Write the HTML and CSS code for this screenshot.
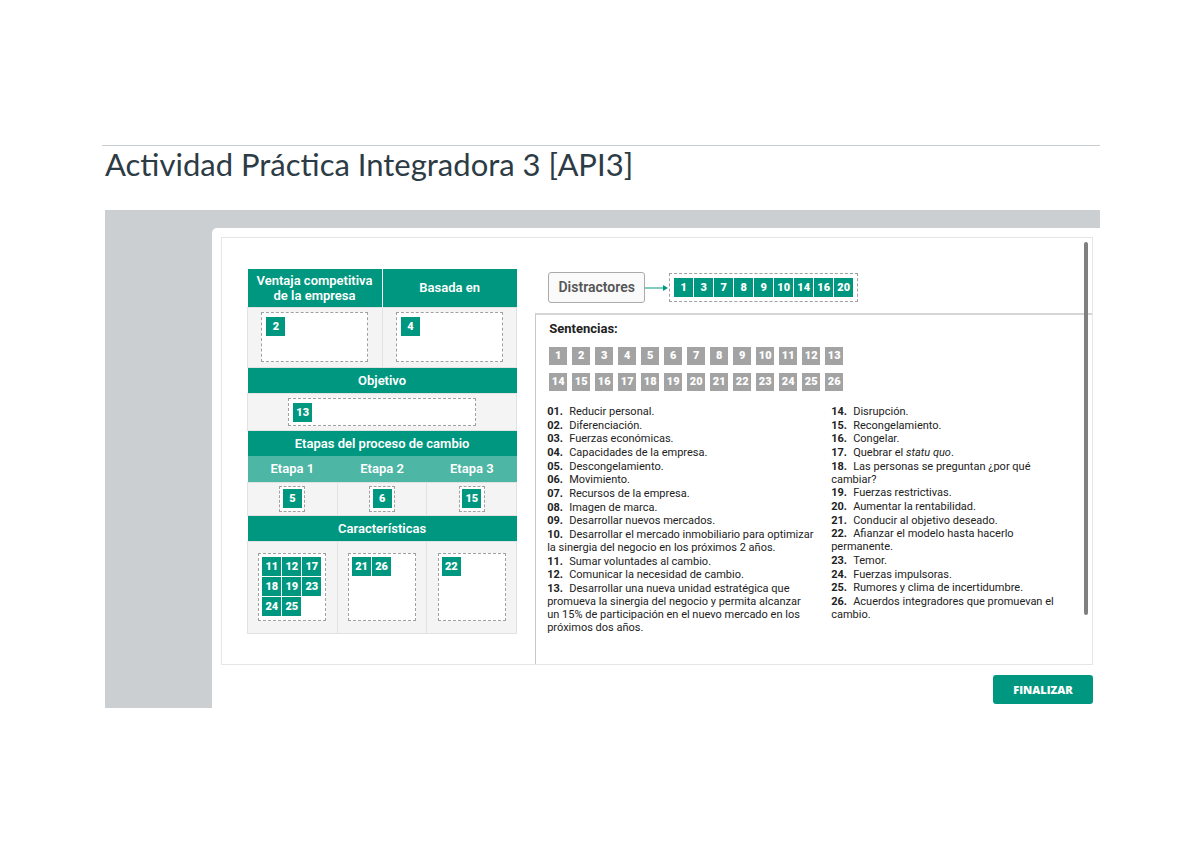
FILE: index.html
```html
<!DOCTYPE html>
<html lang="es">
<head>
    <meta charset="UTF-8">
    <meta name="viewport" content="width=device-width, initial-scale=1.0">
    <title>Actividad Práctica Integradora 3 [API3]</title>
    <link rel="stylesheet" href="styles.css">
</head>
<body>

<header>
    <h1>Actividad Práctica Integradora 3 [API3]</h1>
</header>

<main class="stage">
    <div class="panel">
        <div class="activity">

            <section class="model">
                <table>
                    <tr class="head-top">
                        <th colspan="3">Ventaja competitiva<br>de la empresa</th>
                        <th colspan="3">Basada en</th>
                    </tr>
                    <tr class="row-top">
                        <td colspan="3"><div class="drop drop-wide"><span class="chip">2</span></div></td>
                        <td colspan="3"><div class="drop drop-wide"><span class="chip">4</span></div></td>
                    </tr>
                    <tr class="head">
                        <th colspan="6">Objetivo</th>
                    </tr>
                    <tr class="row-goal">
                        <td colspan="6"><div class="drop drop-goal"><span class="chip">13</span></div></td>
                    </tr>
                    <tr class="head">
                        <th colspan="6">Etapas del proceso de cambio</th>
                    </tr>
                    <tr class="subhead">
                        <th colspan="2">Etapa 1</th>
                        <th colspan="2">Etapa 2</th>
                        <th colspan="2">Etapa 3</th>
                    </tr>
                    <tr class="row-stage">
                        <td colspan="2"><div class="drop drop-one"><span class="chip">5</span></div></td>
                        <td colspan="2"><div class="drop drop-one"><span class="chip">6</span></div></td>
                        <td colspan="2"><div class="drop drop-one"><span class="chip">15</span></div></td>
                    </tr>
                    <tr class="head">
                        <th colspan="6">Características</th>
                    </tr>
                    <tr class="row-features">
                        <td colspan="2">
                            <div class="drop drop-square">
                                <span class="chip">11</span><span class="chip">12</span><span class="chip">17</span>
                                <span class="chip">18</span><span class="chip">19</span><span class="chip">23</span>
                                <span class="chip">24</span><span class="chip">25</span>
                            </div>
                        </td>
                        <td colspan="2">
                            <div class="drop drop-square">
                                <span class="chip">21</span><span class="chip">26</span>
                            </div>
                        </td>
                        <td colspan="2">
                            <div class="drop drop-square">
                                <span class="chip">22</span>
                            </div>
                        </td>
                    </tr>
                </table>
            </section>

            <section class="bank">
                <div class="distractors">
                    <div class="distractors-label">Distractores</div>
                    <svg class="arrow" width="24" height="8" viewBox="0 0 24 8">
                        <path d="M0 4h19" stroke="#009780" stroke-width="1" fill="none"/>
                        <path d="M18 1l5 3-5 3z" fill="#009780"/>
                    </svg>
                    <div class="drop drop-row">
                        <span class="chip">1</span><span class="chip">3</span><span class="chip">7</span>
                        <span class="chip">8</span><span class="chip">9</span><span class="chip">10</span>
                        <span class="chip">14</span><span class="chip">16</span><span class="chip">20</span>
                    </div>
                </div>

                <div class="sentences">
                    <h2>Sentencias:</h2>
                    <div class="numbers">
                        <span class="num">1</span><span class="num">2</span><span class="num">3</span><span class="num">4</span>
                        <span class="num">5</span><span class="num">6</span><span class="num">7</span><span class="num">8</span>
                        <span class="num">9</span><span class="num">10</span><span class="num">11</span><span class="num">12</span>
                        <span class="num">13</span><span class="num">14</span><span class="num">15</span><span class="num">16</span>
                        <span class="num">17</span><span class="num">18</span><span class="num">19</span><span class="num">20</span>
                        <span class="num">21</span><span class="num">22</span><span class="num">23</span><span class="num">24</span>
                        <span class="num">25</span><span class="num">26</span>
                    </div>

                    <div class="lists">
                        <ul>
                            <li><b>01.</b>Reducir personal.</li>
                            <li><b>02.</b>Diferenciación.</li>
                            <li><b>03.</b>Fuerzas económicas.</li>
                            <li><b>04.</b>Capacidades de la empresa.</li>
                            <li><b>05.</b>Descongelamiento.</li>
                            <li><b>06.</b>Movimiento.</li>
                            <li><b>07.</b>Recursos de la empresa.</li>
                            <li><b>08.</b>Imagen de marca.</li>
                            <li><b>09.</b>Desarrollar nuevos mercados.</li>
                            <li><b>10.</b>Desarrollar el mercado inmobiliario para optimizar<br>la sinergia del negocio en los próximos 2 años.</li>
                            <li><b>11.</b>Sumar voluntades al cambio.</li>
                            <li><b>12.</b>Comunicar la necesidad de cambio.</li>
                            <li><b>13.</b>Desarrollar una nueva unidad estratégica que<br>promueva la sinergia del negocio y permita alcanzar<br>un 15% de participación en el nuevo mercado en los<br>próximos dos años.</li>
                        </ul>
                        <ul class="second">
                            <li><b>14.</b>Disrupción.</li>
                            <li><b>15.</b>Recongelamiento.</li>
                            <li><b>16.</b>Congelar.</li>
                            <li><b>17.</b>Quebrar el <i>statu quo</i>.</li>
                            <li><b>18.</b>Las personas se preguntan ¿por qué<br>cambiar?</li>
                            <li><b>19.</b>Fuerzas restrictivas.</li>
                            <li><b>20.</b>Aumentar la rentabilidad.</li>
                            <li><b>21.</b>Conducir al objetivo deseado.</li>
                            <li><b>22.</b>Afianzar el modelo hasta hacerlo<br>permanente.</li>
                            <li><b>23.</b>Temor.</li>
                            <li><b>24.</b>Fuerzas impulsoras.</li>
                            <li><b>25.</b>Rumores y clima de incertidumbre.</li>
                            <li><b>26.</b>Acuerdos integradores que promuevan el<br>cambio.</li>
                        </ul>
                    </div>
                </div>
            </section>

            <div class="scrollbar"></div>
        </div>

        <div class="actions">
            <button type="button">FINALIZAR</button>
        </div>
    </div>
</main>

</body>
</html>
```

FILE: styles.css
```css
* {
    box-sizing: border-box;
}

body {
    font-family: Roboto, Arial, sans-serif;
    margin: 0;
    padding: 145px 100px 0 102px;
    background-color: #fff;
    color: #222;
}

header {
    border-top: 1px solid #c7cdd1;
    padding: 0 3px;
}

h1 {
    margin: 0;
    font-family: Lato, sans-serif;
    font-size: 31px;
    font-weight: 400;
    line-height: 36px;
    color: #2d3b45;
}

.stage {
    margin: 28px 0 0 3px;
    padding: 18px 0 0 107px;
    background-color: #cccfd2;
}

.panel {
    padding: 9px 7px 4px 9px;
    background-color: #fff;
    border-radius: 5px 0 0 0;
}

.activity {
    position: relative;
    display: flex;
    border: 1px solid #e6e6e6;
}

/* Left side: model table */
.model {
    width: 36%;
    padding: 31px 18px 30px 25px;
}

table {
    width: 100%;
    table-layout: fixed;
    border-collapse: collapse;
}

th {
    padding: 0;
    background-color: #009780;
    color: #fff;
    font-size: 13px;
    font-weight: 600;
    line-height: 15px;
}

td {
    padding: 0;
    background-color: #f4f4f4;
    border: 1px solid #e2e2e2;
}

.head-top {
    height: 38px;
}

.head-top th + th {
    border-left: 1px solid #fff;
}

.row-top {
    height: 60px;
}

.head,
.subhead {
    height: 26px;
}

.subhead th {
    background-color: #4db6a5;
}

.row-goal {
    height: 37px;
}

.row-stage {
    height: 33px;
}

.row-features {
    height: 92px;
}

/* Drop zones and chips */
.drop {
    display: flex;
    flex-wrap: wrap;
    align-content: flex-start;
    gap: 1px;
    margin: 0 auto;
    background-color: #fff;
    border: 1px dashed #a0a0a0;
}

.drop-wide {
    width: 80%;
    height: 50px;
    padding: 4px;
}

.drop-goal {
    width: 70%;
    height: 28px;
    padding: 4px;
}

.drop-one {
    width: 26px;
    height: 26px;
    justify-content: center;
    align-content: center;
}

.drop-square {
    width: 68px;
    height: 68px;
    padding: 3px;
}

.drop-row {
    margin: 0;
    padding: 4px;
}

.chip,
.num {
    width: 19px;
    height: 19px;
    background-color: #009780;
    color: #fff;
    font-size: 11px;
    font-weight: 900;
    line-height: 19px;
    text-align: center;
}

/* Right side: distractors and sentences */
.bank {
    flex: 1;
    display: flex;
    flex-direction: column;
}

.distractors {
    display: flex;
    align-items: center;
    padding: 34px 0 10px 13px;
}

.distractors-label {
    width: 97px;
    border: 1px solid #aaa;
    border-radius: 3px;
    background-color: #fafafa;
    color: #555;
    font-size: 14px;
    font-weight: 600;
    line-height: 29px;
    text-align: center;
}

.sentences {
    flex: 1;
    padding: 7px 0 0 11px;
    border-top: 2px solid #d6d6d6;
    border-left: 1px solid #c8c8c8;
}

h2 {
    margin: 0 0 11px 2px;
    font-size: 13px;
    font-weight: 700;
    line-height: 14px;
}

.numbers {
    display: grid;
    grid-template-columns: repeat(13, 18px);
    gap: 8px 5px;
    margin-left: 2px;
}

.num {
    width: 18px;
    height: 18px;
    background-color: #a3a3a3;
    line-height: 18px;
}

.lists {
    display: grid;
    grid-template-columns: 284px 1fr;
    height: 229px;
    margin-top: 14px;
}

ul {
    display: flex;
    flex-direction: column;
    justify-content: space-between;
    margin: 0;
    padding: 0;
    list-style: none;
    font-size: 11px;
    line-height: 13px;
}

.second {
    padding-bottom: 13px;
}

li b {
    display: inline-block;
    width: 22px;
}

.scrollbar {
    position: absolute;
    top: 4px;
    right: 4px;
    width: 4px;
    height: 373px;
    background-color: #808080;
    border-radius: 2px;
}

.actions {
    display: flex;
    justify-content: flex-end;
    margin-top: 10px;
}

button {
    width: 100px;
    height: 29px;
    background-color: #009780;
    color: #fff;
    border: none;
    border-radius: 3px;
    font-family: "Open Sans", sans-serif;
    font-size: 11px;
    font-weight: 800;
    cursor: pointer;
}

button:hover {
    background-color: #00806c;
}
```
